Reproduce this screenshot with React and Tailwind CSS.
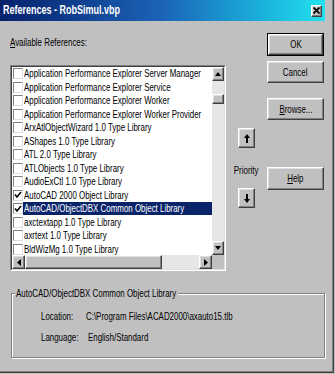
import React from 'react';
import clsx from 'clsx';

// ── Text is squeezed horizontally in the reference (scaled screenshot) ─────
const T = ({ children, className = '', center = false }) => (
  <span
    className={clsx(
      'inline-block whitespace-nowrap scale-x-[0.72]',
      center ? 'origin-center' : 'origin-left',
      className
    )}
  >
    {children}
  </span>
);

// ── Classic raised 3D box ───────────────────────────────────────────────────
const Raised = ({ className = '', children }) => (
  <div
    className={clsx(
      'flex items-center justify-center bg-[#c0c0c0] border border-t-white border-l-white border-r-[#404040] border-b-[#404040] shadow-[inset_-1px_-1px_0_#808080,inset_1px_1px_0_#dfdfdf]',
      className
    )}
  >
    {children}
  </div>
);

const Button = ({ children, isDefault = false, className = '' }) => {
  const inner = (
    <Raised className={clsx('w-full h-full', className)}>
      <T center>{children}</T>
    </Raised>
  );
  if (!isDefault) return <div className="w-[57px] h-[22px]">{inner}</div>;
  return <div className="w-[57px] h-[23px] border border-black">{inner}</div>;
};

const Tri = ({ dir }) => {
  const pts = {
    up: '0,4 3.5,0 7,4',
    down: '0,0 3.5,4 7,0',
    left: '4,0 0,3.5 4,7',
    right: '0,0 4,3.5 0,7',
  }[dir];
  const vertical = dir === 'up' || dir === 'down';
  return (
    <svg width={vertical ? 6 : 4} height={vertical ? 4 : 7} viewBox={vertical ? '0 0 7 4' : '0 0 4 7'} preserveAspectRatio="none">
      <polygon points={pts} fill="#000" />
    </svg>
  );
};

const Check = () => (
  <svg width="8" height="8" viewBox="0 0 8 8">
    <polyline points="1,3.5 3,6 7,1" fill="none" stroke="#000" strokeWidth="1.6" />
  </svg>
);

const Arrow = ({ up }) => (
  <svg width="6" height="9" viewBox="0 0 6 9">
    {up ? (
      <>
        <polygon points="0,4 3,0 6,4" fill="#000" />
        <rect x="2" y="4" width="2" height="5" fill="#000" />
      </>
    ) : (
      <>
        <rect x="2" y="0" width="2" height="5" fill="#000" />
        <polygon points="0,5 3,9 6,5" fill="#000" />
      </>
    )}
  </svg>
);

const refs = [
  { name: 'Application Performance Explorer Server Manager' },
  { name: 'Application Performance Explorer Service' },
  { name: 'Application Performance Explorer Worker' },
  { name: 'Application Performance Explorer Worker Provider' },
  { name: 'ArxAtlObjectWizard 1.0 Type Library' },
  { name: 'AShapes 1.0 Type Library' },
  { name: 'ATL 2.0 Type Library' },
  { name: 'ATLObjects 1.0 Type Library' },
  { name: 'AudioExCtl 1.0 Type Library' },
  { name: 'AutoCAD 2000 Object Library', checked: true },
  { name: 'AutoCAD/ObjectDBX Common Object Library', checked: true, selected: true },
  { name: 'axctextapp 1.0 Type Library' },
  { name: 'axrtext 1.0 Type Library' },
  { name: 'BldWizMg 1.0 Type Library' },
];

const Row = ({ item }) => (
  <div className="flex items-center h-[13.5px] shrink-0">
    <div className="ml-[1px] w-[10px] h-[11px] shrink-0 bg-white border border-t-[#808080] border-l-[#808080] border-r-[#dfdfdf] border-b-[#dfdfdf] flex items-center justify-center">
      {item.checked && <Check />}
    </div>
    <div
      className={clsx(
        'flex-1 h-[13px] pl-[1px] overflow-hidden flex items-center',
        item.selected ? 'bg-[#0a246a] text-white' : 'text-black'
      )}
    >
      <T>{item.name}</T>
    </div>
  </div>
);

const ReferenceList = () => (
  <div className="w-[216px] h-[206px] border border-t-[#808080] border-l-[#808080] border-r-white border-b-white">
    <div className="w-full h-full border border-t-[#404040] border-l-[#404040] border-r-[#dfdfdf] border-b-[#dfdfdf] bg-white flex flex-col">
      <div className="flex flex-1 min-h-0">
        {/* rows */}
        <div className="w-[200px] overflow-hidden flex flex-col">
          {refs.map((r) => (
            <Row key={r.name} item={r} />
          ))}
        </div>
        {/* vertical scrollbar */}
        <div className="w-[12px] flex flex-col bg-[#e6e6e6]">
          <Raised className="h-[14px] shrink-0">
            <Tri dir="up" />
          </Raised>
          <div className="flex-1 flex flex-col">
            <div className="h-[13px]" />
            <Raised className="h-[10px]" />
          </div>
          <Raised className="h-[14px] shrink-0">
            <Tri dir="down" />
          </Raised>
        </div>
      </div>
      {/* horizontal scrollbar */}
      <div className="h-[14px] flex shrink-0">
        <div className="w-[200px] flex bg-[#e6e6e6]">
          <Raised className="w-[13px] shrink-0">
            <Tri dir="left" />
          </Raised>
          <Raised className="w-[137px] shrink-0" />
          <div className="flex-1" />
          <Raised className="w-[13px] shrink-0">
            <Tri dir="right" />
          </Raised>
        </div>
        <div className="w-[12px] bg-[#c0c0c0]" />
      </div>
    </div>
  </div>
);

const App = () => {
  return (
    <div className="w-[335px] h-[374px] bg-[#c0c0c0] font-['Liberation_Sans',Arial,sans-serif] text-[11px] leading-[13px] text-black overflow-hidden">
      <div className="w-[334px] h-[373px] border-r border-b border-[#404040] shadow-[inset_-1px_-1px_0_#808080] flex flex-col">
        {/* ── Title bar ── */}
        <div className="h-[21px] mr-[8px] flex items-center bg-linear-to-r from-[#08206c] via-[#1c64b8] to-[#22e2ee]">
          <div className="flex-1 pl-[3px] text-white font-bold text-[12.5px] overflow-hidden">
            <T>References - RobSimul.vbp</T>
          </div>
          <Raised className="w-[11px] h-[12px] mr-[3px] shrink-0">
            <svg width="7" height="7" viewBox="0 0 7 7">
              <path d="M0.5 0.5 L6.5 6.5 M6.5 0.5 L0.5 6.5" stroke="#000" strokeWidth="1.7" />
            </svg>
          </Raised>
        </div>

        {/* ── Main area ── */}
        <div className="flex">
          <div className="pl-[10px] pt-[15px] flex flex-col">
            <div className="h-[13px]">
              <T>
                <span className="underline">A</span>vailable References:
              </T>
            </div>
            <div className="mt-[16px]">
              <ReferenceList />
            </div>
          </div>

          <div className="ml-[6px] w-[29px] pt-[107px] flex flex-col items-center">
            <Raised className="w-[17px] h-[20px]">
              <Arrow up />
            </Raised>
            <div className="mt-[16px] h-[13px] w-full flex justify-center">
              <T center>Priority</T>
            </div>
            <Raised className="mt-[11px] w-[17px] h-[20px]">
              <Arrow />
            </Raised>
          </div>

          <div className="ml-[6px] pt-[12px] flex flex-col">
            <Button isDefault>OK</Button>
            <div className="mt-[5px]">
              <Button>Cancel</Button>
            </div>
            <div className="mt-[15px]">
              <Button>
                <span className="underline">B</span>rowse...
              </Button>
            </div>
            <div className="mt-[47px] h-[23px] w-[57px]">
              <Raised className="w-full h-full">
                <T center>
                  <span className="underline">H</span>elp
                </T>
              </Raised>
            </div>
          </div>
        </div>

        {/* ── Group box ── */}
        <div className="mt-[22px] ml-[11px] w-[314px] h-[65px] border border-[#808080] shadow-[1px_1px_0_white,inset_1px_1px_0_white] flex flex-col">
          <div className="-mt-[7px] ml-[3px] w-[163px] h-[13px] pl-[1px] bg-[#c0c0c0] overflow-hidden">
            <T>AutoCAD/ObjectDBX Common Object Library</T>
          </div>
          <div className="mt-[10px] h-[13px] flex pl-[29px]">
            <div className="w-[45px]">
              <T>Location:</T>
            </div>
            <T>{'C:\\Program Files\\ACAD2000\\axauto15.tlb'}</T>
          </div>
          <div className="mt-[8px] h-[13px] flex pl-[29px]">
            <div className="w-[47px]">
              <T>Language:</T>
            </div>
            <T>English/Standard</T>
          </div>
        </div>
      </div>
    </div>
  );
};

export default App;
